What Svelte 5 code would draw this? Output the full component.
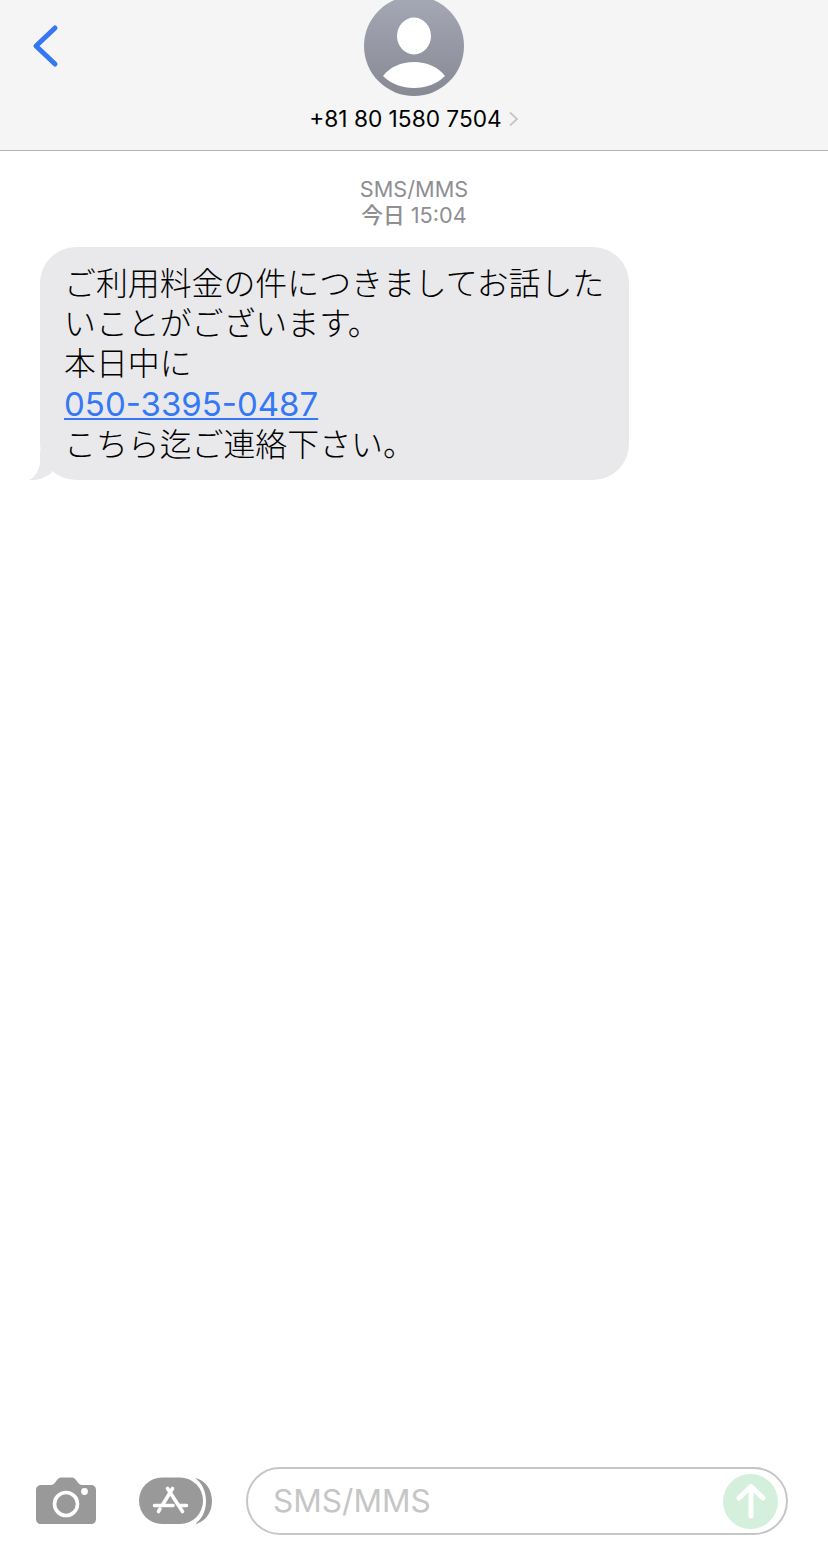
<script>
  const sender = '+81 80 1580 7504';
</script>

<div class="screen">
  <header class="topbar">
    <button class="back" aria-label="戻る">
      <svg width="34" height="50" viewBox="0 0 34 50">
        <path d="M27 7 L8 25 L27 43" fill="none" stroke="#3478f6" stroke-width="5" stroke-linecap="round" stroke-linejoin="round" />
      </svg>
    </button>
    <div class="contact">
      <svg class="avatar" width="100" height="100" viewBox="0 0 100 100">
        <defs>
          <linearGradient id="avatarFill" x1="0" y1="0" x2="0" y2="1">
            <stop offset="0" stop-color="#a5a8b5" />
            <stop offset="1" stop-color="#878a94" />
          </linearGradient>
        </defs>
        <circle cx="50" cy="50" r="50" fill="url(#avatarFill)" />
        <ellipse cx="50" cy="40" rx="17" ry="18.500" fill="#fff" />
        <path d="M19 80 C26 71 37 66 50 66 C63 66 74 71 81 80 C73 88 62 92 50 92 C38 92 27 88 19 80 Z" fill="#fff" />
      </svg>
      <div class="number">
        <span>{sender}</span>
        <svg width="10" height="16" viewBox="0 0 10 16">
          <path d="M1 1.500 L8 8 L1 14.500" fill="none" stroke="#c6c6c8" stroke-width="1.800" />
        </svg>
      </div>
    </div>
    <div></div>
  </header>

  <main class="thread">
    <div class="stamp">
      <div>SMS/MMS</div>
      <div><b>今日</b> 15:04</div>
    </div>
    <div class="bubble">
      <svg class="tail" width="24" height="30" viewBox="0 0 24 30">
        <path d="M12 0 L12 12 C11 20 6 27 1 29 C10 30 19 26 24 21 L24 0 Z" fill="#e9e9eb" />
      </svg>
      <p>ご利用料金の件につきましてお話したいことがございます。<br />本日中に<br /><a href="#tel">050-3395-0487</a><br />こちら迄ご連絡下さい。</p>
    </div>
  </main>

  <footer class="composer">
    <svg class="camera" width="60" height="48" viewBox="0 0 60 48">
      <path d="M6 8 L15 8 C17 8 18 7 19.500 5 L21 3 C22.500 1 24 0.500 26 0.500 L35 0.500 C37 0.500 38.500 1 40 3 L41.500 5 C43 7 44 8 46 8 L55 8 C58 8 60 10 60 13 L60 42 C60 45 58 47 55 47 L5 47 C2 47 0 45 0 42 L0 13 C0 10 2 8 6 8 Z" fill="#999" />
      <circle cx="30" cy="27" r="11.500" fill="none" stroke="#fff" stroke-width="3.600" />
      <circle cx="48.500" cy="14.500" r="3.400" fill="#fff" />
    </svg>

    <svg class="store" width="74" height="48" viewBox="0 0 74 48">
      <path d="M56 1 C66 3 73 12 73 24 C73 36 66 45 56 47 C63 42 67 34 67 24 C67 14 63 6 56 1 Z" fill="#999" />
      <rect x="0" y="0.500" width="64" height="46.500" rx="23" fill="#999" />
      <g fill="none" stroke="#fff" stroke-width="3.600" stroke-linecap="round">
        <path d="M33.500 11.500 L23.500 28 M21 32 L19.500 34.500" />
        <path d="M28.500 11.500 L43.500 34.500" />
        <path d="M15.500 28.500 L34 28.500 M40 28.500 L47.500 28.500" />
      </g>
    </svg>

    <div class="field">
      <span class="placeholder">SMS/MMS</span>
      <span class="send">
        <svg width="34" height="36" viewBox="0 0 34 36">
          <path d="M17 33 L17 4 M5 15 L17 3.500 L29 15" fill="none" stroke="#fff" stroke-width="5" stroke-linecap="round" stroke-linejoin="round" />
        </svg>
      </span>
    </div>
  </footer>
</div>

<style>
  :global(body) {
    margin: 0;
    background: #fff;
  }

  .screen {
    width: 828px;
    height: 1542px;
    display: flex;
    flex-direction: column;
    overflow: hidden;
    font-family: Inter, "Noto Sans CJK JP", sans-serif;
  }

  .topbar {
    flex: none;
    height: 150px;
    box-sizing: content-box;
    display: grid;
    grid-template-columns: 1fr auto 1fr;
    background: #f5f5f5;
    border-bottom: 1px solid #b4b4b4;
  }

  .back {
    justify-self: start;
    align-self: start;
    margin: 21px 0 0 28px;
    padding: 0;
    border: 0;
    background: none;
    line-height: 0;
  }

  .contact {
    display: flex;
    flex-direction: column;
    align-items: center;
  }

  .avatar {
    display: block;
    margin-top: -4px;
  }

  .number {
    display: flex;
    align-items: center;
    gap: 7px;
    margin-top: 9px;
    font-size: 22.700px;
    line-height: 28px;
    color: #000;
  }

  .thread {
    flex: 1;
    padding: 25px 0 0 40px;
  }

  .stamp {
    margin-left: -40px;
    text-align: center;
    font-size: 21.700px;
    line-height: 26px;
    color: #8e8e93;
  }

  .stamp b {
    font-weight: 500;
  }

  .bubble {
    position: relative;
    width: 589px;
    height: 233px;
    margin-top: 19px;
    box-sizing: border-box;
    padding: 17px 22px 0 24px;
    border-radius: 36px;
    background: #e9e9eb;
  }

  .tail {
    position: absolute;
    left: -12px;
    bottom: -1px;
    display: block;
  }

  .bubble p {
    position: relative;
    margin: 0;
    font-size: 31.900px;
    font-weight: 300;
    line-height: 40px;
    color: #000;
  }

  .bubble a {
    color: #3478f6;
    text-decoration: underline;
    text-decoration-thickness: 2px;
    text-underline-offset: 2px;
    font-size: 33px;
    font-weight: 400;
  }

  .composer {
    flex: none;
    display: flex;
    align-items: center;
    height: 68px;
    margin-bottom: 7px;
    padding: 0 40px 0 36px;
  }

  .camera {
    flex: none;
    display: block;
  }

  .store {
    flex: none;
    display: block;
    margin-left: 43px;
  }

  .field {
    flex: 1;
    height: 68px;
    margin-left: 33px;
    box-sizing: border-box;
    display: flex;
    align-items: center;
    justify-content: space-between;
    padding: 0 8px 0 25px;
    border: 2px solid #c6c6c6;
    border-radius: 34px;
  }

  .placeholder {
    padding-bottom: 2px;
    font-size: 31.600px;
    color: #c6c6c6;
  }

  .send {
    width: 55px;
    height: 55px;
    border-radius: 50%;
    background: #d4efdb;
    display: flex;
    align-items: center;
    justify-content: center;
  }
</style>
